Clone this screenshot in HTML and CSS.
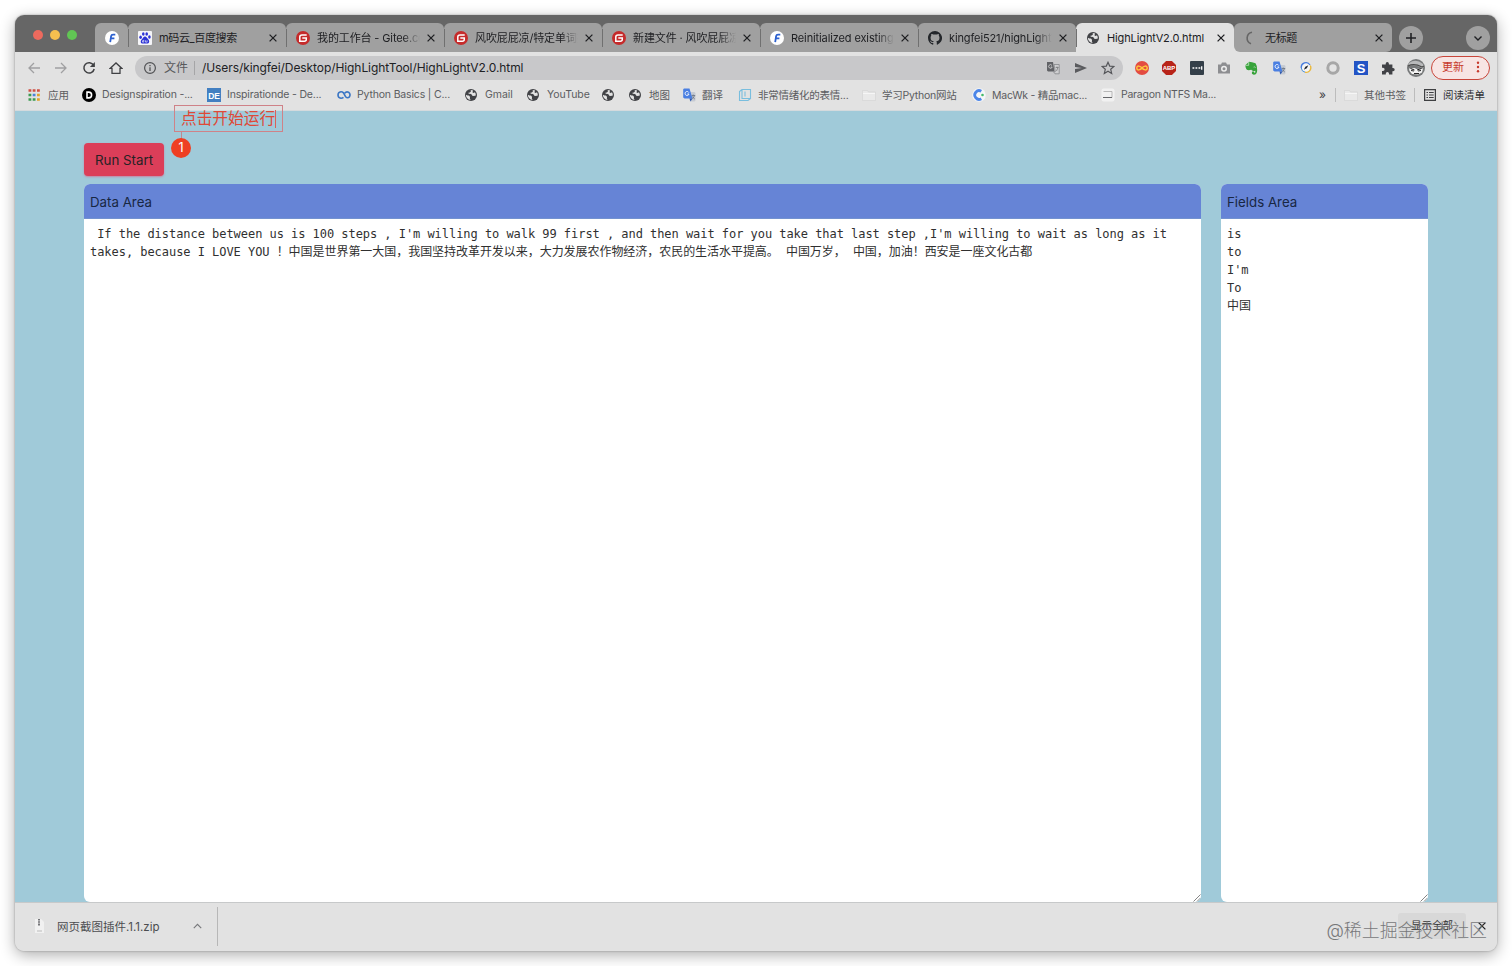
FILE: index.html
```html
<!DOCTYPE html>
<html lang="zh-CN">
<head>
<meta charset="utf-8">
<title>HighLightV2.0.html</title>
<link rel="stylesheet" href="styles.css">
</head>
<body>
<svg class="defs" width="0" height="0" aria-hidden="true">
  <symbol id="globe" viewBox="0 0 12 12"><circle cx="6" cy="6" r="6" fill="#414246"/><path d="M.9 5.800 2.600 6.600l1.400-.1 1.100 1.500-.3 1.200.8 1.700A5 5 0 0 1 .9 5.800zM5.600 1 6 2.200 4.900 3.400l-1.500.3.300 1.100 2.500.3 1.100 1.600 1.600.3 1.900-.5A4.900 4.900 0 0 0 10 3.300L8.600 4 7.400 3.300 8.200 1.600A5 5 0 0 0 5.600 1z" fill="#e2e2e2"/></symbol>
  <symbol id="gitee" viewBox="0 0 14 14"><circle cx="7" cy="7" r="7" fill="#c52b2b"/><path d="M10.700 4H6Q3.800 4 3.800 6V10.200H8.300Q10.300 10.200 10.300 8.200V7H6.300" fill="none" stroke="#fff" stroke-width="1.500"/></symbol>
  <symbol id="fmark" viewBox="0 0 14 14"><circle cx="7" cy="7" r="7" fill="#fff"/><path d="M5.200 11.200 6.100 5.200Q6.400 3.700 8 3.700H10.300M5.800 7.300H9.400" fill="none" stroke="#2d61cf" stroke-width="1.800"/></symbol>
  <symbol id="x" viewBox="0 0 8 8"><path d="m.6.6 6.800 6.800m0-6.800L.6 7.400" stroke="#202124" stroke-width="1.300"/></symbol>
  <symbol id="folder" viewBox="0 0 14 12"><path d="M.5 1.500h5l1 1.500h7v8.500H.5z" fill="#e9e9e9" stroke="#d2d2d2" stroke-width=".6"/><path d="M1 4.500h12" stroke="#f6f6f6"/></symbol>
  <symbol id="gtrans" viewBox="0 0 14 14"><path d="M6 4h6.500l1 1v7.500l-1 1H8z" fill="#c6cbd3"/><path d="M2 .5h5.500l3 10H2.500L1.200 9.500V1.300z" fill="#4a7fe2"/><path d="M7.500 10.500h3l-2 3z" fill="#2d58ae"/><path d="M6.800 4.500A2 2 0 1 0 7 6H5.300" fill="none" stroke="#fff" stroke-width=".9"/><path d="M9.700 7.500h3.500M11.200 6.500v1m1.300 0q-.5 2-2.200 3m.2-2q1 2 2.300 2.500" fill="none" stroke="#687180" stroke-width=".8"/></symbol>
  <symbol id="grip" viewBox="0 0 8 8"><path d="M.5 7.500 7.500.5M4 7.500 7.500 4" stroke="#777" stroke-width=".9"/></symbol>
</svg>
<div class="window">
  <div class="tabstrip">
    <div class="lights"><i class="red"></i><i class="yellow"></i><i class="green"></i></div>
    <div class="tab pinned"><svg class="fav"><use href="#fmark"/></svg></div>
    <div class="tab"><svg class="fav" viewBox="0 0 14 14"><rect width="14" height="14" rx="1" fill="#f5f5f8"/><g fill="#2c32d6"><ellipse cx="2.600" cy="6.300" rx="1.300" ry="1.700"/><ellipse cx="5.300" cy="3" rx="1.300" ry="1.800"/><ellipse cx="8.700" cy="3" rx="1.300" ry="1.800"/><ellipse cx="11.400" cy="6" rx="1.300" ry="1.700"/><path d="M7 5.600c1.500 0 2 1.600 3.200 2.700 2 2 .7 4.500-1.200 4.300-1.500-.2-2.500-.2-4 0-2 .2-3.200-2.200-1.300-4.200C5 7.300 5.500 5.600 7 5.600z"/></g><path d="M5.800 8.800v2.300H4.500V9.700h1.300M7.500 9.300v1.800h1.600V9.300" fill="none" stroke="#fff" stroke-width=".6"/></svg><span class="title cn">m码云_百度搜索</span><svg class="close"><use href="#x"/></svg></div>
    <div class="tab"><svg class="fav"><use href="#gitee"/></svg><span class="title fade">我的工作台 - Gitee.com</span><svg class="close"><use href="#x"/></svg></div>
    <div class="tab"><svg class="fav"><use href="#gitee"/></svg><span class="title fade">风吹屁屁凉/特定单词提取</span><svg class="close"><use href="#x"/></svg></div>
    <div class="tab"><svg class="fav"><use href="#gitee"/></svg><span class="title fade">新建文件 · 风吹屁屁凉/特定</span><svg class="close"><use href="#x"/></svg></div>
    <div class="tab"><svg class="fav"><use href="#fmark"/></svg><span class="title fade">Reinitialized existing Git</span><svg class="close"><use href="#x"/></svg></div>
    <div class="tab"><svg class="fav" viewBox="0 0 16 16"><path fill="#24272b" d="M8 0C3.580 0 0 3.580 0 8c0 3.540 2.290 6.530 5.470 7.590.4.070.55-.17.55-.38v-1.490c-2.010.37-2.530-.49-2.690-.94-.09-.23-.48-.94-.82-1.130-.28-.15-.68-.52-.01-.53.63-.01 1.080.58 1.230.82.72 1.210 1.870.87 2.330.66.070-.52.28-.87.51-1.070-1.780-.2-3.640-.89-3.640-3.950 0-.87.31-1.590.82-2.150-.08-.2-.36-1.020.08-2.120 0 0 .67-.21 2.200.82a7.600 7.600 0 0 1 4 0c1.530-1.040 2.200-.82 2.200-.82.44 1.100.16 1.920.08 2.120.51.56.82 1.270.82 2.150 0 3.070-1.870 3.750-3.650 3.950.29.25.54.73.54 1.480v2.200c0 .21.150.46.55.38A8 8 0 0 0 8 0z"/></svg><span class="title fade">kingfei521/highLightTool</span><svg class="close"><use href="#x"/></svg></div>
    <div class="tab active"><svg class="fav small"><use href="#globe"/></svg><span class="title">HighLightV2.0.html</span><svg class="close"><use href="#x"/></svg></div>
    <div class="tab last"><svg class="fav" viewBox="0 0 14 14"><path d="M8 1.200A6 6 0 0 0 7 12.700" fill="none" stroke="#666" stroke-width="1.600"/></svg><span class="title cn">无标题</span><svg class="close"><use href="#x"/></svg></div>
    <svg class="round plus" viewBox="0 0 24 24"><circle cx="12" cy="12" r="12" fill="#a0a0a0"/><path d="M7 12h10M12 7v10" stroke="#202124" stroke-width="1.600"/></svg>
    <svg class="round down" viewBox="0 0 24 24"><circle cx="12" cy="12" r="12" fill="#a0a0a0"/><path d="m8.500 10.500 3.500 3.500 3.500-3.500" fill="none" stroke="#202124" stroke-width="1.400"/></svg>
  </div>

  <div class="toolbar">
    <div class="nav">
      <svg viewBox="0 0 14 14"><path d="M13 7H2m5-5L2 7l5 5" fill="none" stroke="#a0a0a2" stroke-width="1.300"/></svg>
      <svg viewBox="0 0 14 14"><path d="M1 7h11M7 2l5 5-5 5" fill="none" stroke="#a0a0a2" stroke-width="1.300"/></svg>
      <svg viewBox="0 0 14 14"><path d="M11.600 4.200A5.200 5.200 0 1 0 12.200 8" fill="none" stroke="#404144" stroke-width="1.500"/><path d="M12.900 1v5h-5z" fill="#404144"/></svg>
      <svg viewBox="0 0 14 14"><path d="M1.300 7.300 7 2 12.700 7.300H11v5H3v-5z" fill="none" stroke="#404144" stroke-width="1.300"/></svg>
    </div>
    <div class="address">
      <svg class="info" viewBox="0 0 12 12"><circle cx="6" cy="6" r="5.400" fill="none" stroke="#505154" stroke-width="1.200"/><path d="M6 5.200V9M6 3v1.200" stroke="#505154" stroke-width="1.300"/></svg>
      <span class="scheme">文件</span><span class="url">/Users/kingfei/Desktop/HighLightTool/HighLightV2.0.html</span>
      <div class="actions">
        <svg viewBox="0 0 14 14"><path d="M1 1h6l1.500 9.500H2L1 9.500z" fill="#616266"/><path d="M8 3.500h5.200v9.300H9L7.500 10.700h1.800z" fill="#cfcfd1" stroke="#85868a" stroke-width=".8"/><path d="M6 4.500A1.800 1.800 0 1 0 6.200 6H4.800" fill="none" stroke="#d5d5d7" stroke-width=".8"/><path d="M9.700 6.500h2.800M11 5.500v1m1 0-1.500 3.500" fill="none" stroke="#77787b" stroke-width=".8"/></svg>
        <svg viewBox="0 0 14 14"><path d="m1 2 12 5-12 5V8.100L8 7 1 5.900z" fill="#5a5b5e"/></svg>
        <svg viewBox="0 0 14 14"><path d="m7 1.300 1.700 3.800 4.200.4-3.200 2.800 1 4.100L7 10.200l-3.700 2.200 1-4.100-3.200-2.800 4.200-.4z" fill="none" stroke="#55565a" stroke-width="1.200"/></svg>
      </div>
    </div>
    <div class="extensions">
      <svg viewBox="0 0 14 14"><circle cx="7" cy="7" r="7" fill="#e34c42"/><path d="M7 7C5.500 4.800 1.800 4.200 1.800 7s3.700 2.200 5.200 0 5.200-2.800 5.200 0S8.500 9.200 7 7z" fill="none" stroke="#ffc83d" stroke-width="1.500"/></svg>
      <svg viewBox="0 0 14 14"><path d="M4.100 0h5.800L14 4.100v5.800L9.900 14H4.100L0 9.900V4.100z" fill="#b82419"/><text x="7" y="9.100" text-anchor="middle" class="abp">ABP</text></svg>
      <svg viewBox="0 0 14 14"><rect width="14" height="14" rx="1" fill="#343f49"/><path d="M2.500 7h1.800M5.500 7h1.800M8.500 7h1.800M11.700 5.300v3.400" stroke="#fff" stroke-width="1.300"/></svg>
      <svg viewBox="0 0 14 14"><path d="M1 3.500h3l1-2h4l1 2h3v9H1z" fill="#8d8e91"/><circle cx="7" cy="7.800" r="3" fill="#eee"/><circle cx="7" cy="7.800" r="1.500" fill="#8d8e91"/></svg>
      <svg viewBox="0 0 14 14"><path d="M1.500 4 5 .7 8 1.300l3.500.9Q13.500 5 13.200 9q0 4.700-3.400 4.700-2.800-.4-1.600-3.200h1.900v1.300l1.200-.3V9.700Q8 10.500 7.300 8.800 4 10 2.400 8.300 1 6.500 1.500 4z" fill="#37a33a"/><path d="M1.700 4.300h3V1.200M9.700 6.200q1-1 1.800.5" fill="none" stroke="#dcebdc" stroke-width=".7"/></svg>
      <svg><use href="#gtrans"/></svg>
      <svg viewBox="0 0 14 14"><circle cx="7" cy="6.500" r="4.700" fill="#f5f5f5"/><path d="M2.300 7A4.700 4.700 0 0 1 11 4" fill="none" stroke="#467bdc" stroke-width="1.300"/><path d="M11.300 4.500A4.700 4.700 0 0 1 6 11.200" fill="none" stroke="#eab83b" stroke-width="1.300"/><path d="M6 11.200A4.700 4.700 0 0 1 2.300 7" fill="none" stroke="#498fd8"/><path d="m4.800 8.800 1.500-3 3-1.600-1.500 3z" fill="#20252d"/></svg>
      <svg viewBox="0 0 14 14"><circle cx="7" cy="7" r="5.200" fill="#e4e4e4" stroke="#a7a7a7" stroke-width="3"/></svg>
      <svg viewBox="0 0 14 14"><rect width="14" height="14" fill="#2354c5"/><text x="7" y="11.800" text-anchor="middle" class="smark">S</text></svg>
      <svg viewBox="0 0 14 14"><path d="M1 3.500h3.700V2.700a1.600 1.600 0 0 1 3.200 0v.8h3.500V7h.7a1.600 1.600 0 0 1 0 3.200h-.7v3.300H8v-1a1.600 1.600 0 0 0-3.200 0v1H1v-3.600h1a1.600 1.600 0 0 0 0-3.200H1z" fill="#414246"/></svg>
      <svg class="avatar" viewBox="0 0 18 18"><circle cx="9" cy="9" r="9" fill="#77797a"/><path d="M2 4Q9-1 16 5l1 3-2 1Q8 5 1 7z" fill="#b9babb"/><path d="M1 7q6-3 14 1l2-1" fill="none" stroke="#4a4a4a" stroke-width="1.200"/><path d="M2 9.500 8 9l1 1 7-.5-1 4-4 2-6-.5-2.500-3z" fill="#f2f2f2"/><path d="m3.500 9.500 4 1.500M14.500 9.500 10 11M4 11.500l3 .5m7-.5-3 .5M7 14.500h5" stroke="#252525" stroke-width="1"/></svg>
    </div>
    <div class="update"><span>更新</span><svg viewBox="0 0 4 14"><g fill="#c73a2d"><circle cx="2" cy="2" r="1.400"/><circle cx="2" cy="7" r="1.400"/><circle cx="2" cy="12" r="1.400"/></g></svg></div>
  </div>

  <div class="bookmarks">
    <div class="bm"><svg viewBox="0 0 14 14"><path d="M1.500 2.500h2.800M5.700 2.500h2.800M10 2.500h2.800" stroke="#d05044" stroke-width="2.600"/><path d="M1.500 7h2.800M1.500 11.500h2.800M5.700 11.500h2.800" stroke="#3c9a50" stroke-width="2.600"/><path d="M5.700 7h2.800" stroke="#4b83db" stroke-width="2.600"/><path d="M10 7h2.800M10 11.500h2.800" stroke="#e1a22c" stroke-width="2.600"/></svg><span>应用</span></div>
    <div class="bm"><svg viewBox="0 0 14 14"><circle cx="7" cy="7" r="7"/><path d="M5 4.100h1.700a2.900 2.900 0 0 1 0 5.800H5z" fill="none" stroke="#fff" stroke-width="1.600"/></svg><span>Designspiration -...</span></div>
    <div class="bm"><svg viewBox="0 0 14 14"><rect width="14" height="14" fill="#427fc1"/><text x="7" y="10.500" text-anchor="middle" class="de">DE</text></svg><span>Inspirationde - De...</span></div>
    <div class="bm"><svg viewBox="0 0 14 14"><path d="M6.500 9.300Q5.300 10.300 3.900 10.200 1 9.800 1 7t2.900-3.200Q5.300 3.700 6.500 4.900L8.600 8.700q2 2 3.800.2Q14 6 11.500 4.200 9.300 3.200 7.700 5.200" fill="none" stroke="#3b76c4" stroke-width="1.600"/></svg><span>Python Basics | C...</span></div>
    <div class="bm"><svg class="g"><use href="#globe"/></svg><span>Gmail</span></div>
    <div class="bm"><svg class="g"><use href="#globe"/></svg><span>YouTube</span></div>
    <div class="bm"><svg class="g"><use href="#globe"/></svg></div>
    <div class="bm"><svg class="g"><use href="#globe"/></svg><span>地图</span></div>
    <div class="bm"><svg><use href="#gtrans"/></svg><span>翻译</span></div>
    <div class="bm"><svg viewBox="0 0 14 14"><path d="M4 1.500h8.500v9H4zM4 1.500 1.500 3.500v9H10l2.500-2M7 3.500v5" fill="none" stroke="#79bede" stroke-width="1.100"/></svg><span>非常情绪化的表情...</span></div>
    <div class="bm"><svg><use href="#folder"/></svg><span>学习Python网站</span></div>
    <div class="bm"><svg viewBox="0 0 14 14"><circle cx="7" cy="7" r="6.800" fill="#f5f6f8"/><path d="M9.300 3.300A4.300 4.300 0 1 0 9.300 10.700" fill="none" stroke="#4c86e8" stroke-width="2.800"/><circle cx="10.500" cy="7" r="1.300" fill="#43b96b"/></svg><span>MacWk - 精品mac...</span></div>
    <div class="bm"><svg viewBox="0 0 14 14"><rect x=".5" y=".5" width="13" height="13" rx="2" fill="#f1f1f1"/><path d="M2.500 3.500h8.500v6H2.500" fill="none" stroke="#aaa" stroke-width=".8"/><path d="M2 9.500h9" stroke="#66676a"/></svg><span>Paragon NTFS Ma...</span></div>
    <div class="more">»</div>
    <div class="bm split"><svg><use href="#folder"/></svg><span>其他书签</span></div>
    <div class="bm split reading"><svg viewBox="0 0 14 14"><path d="M1.600 1.600h10.800v10.800H1.600zM3.500 4.500H5M6 4.500h4.700M3.500 7H5M6 7h4.700M3.500 9.500H5M6 9.500h4.700" fill="none" stroke="#3e3f42" stroke-width="1.200"/></svg><span>阅读清单</span></div>
  </div>

  <main class="page">
    <button class="run">Run Start</button>
    <div class="panels">
      <section class="panel"><h2>Data Area</h2><div class="field"><div class="line">&nbsp;If the distance between us is 100 steps , I'm willing to walk 99 first , and then wait for you take that last step ,I'm willing to wait as long as it</div><div class="line">takes, because I LOVE YOU ！中国是世界第一大国，我国坚持改革开发以来，大力发展农作物经济，农民的生活水平提高。 中国万岁， 中国，加油！西安是一座文化古都</div><svg class="grip"><use href="#grip"/></svg></div></section>
      <section class="panel"><h2>Fields Area</h2><div class="field"><div class="line">is</div><div class="line">to</div><div class="line">I'm</div><div class="line">To</div><div class="line">中国</div><svg class="grip"><use href="#grip"/></svg></div></section>
    </div>
    <div class="callout">点击开始运行</div>
    <div class="step">1</div>
  </main>

  <footer class="downloads">
    <div class="download"><svg viewBox="0 0 14 16"><path d="M3 1h6l3 3v11H3z" fill="#f1f1f1"/><path d="M7 1v7" stroke="#55565a" stroke-width="1.600" stroke-dasharray="1.500 .7"/><path d="M5 13h5" stroke="#bbb"/></svg><span>网页截图插件.1.1.zip</span><svg class="up" viewBox="0 0 8 5"><path d="m.7 4.300 3.300-3.300 3.300 3.300" fill="none" stroke="#77787b" stroke-width="1"/></svg></div>
    <div class="showall"><span>显示全部</span></div>
    <svg class="shelfclose"><use href="#x"/></svg>
    <div class="watermark">@稀土掘金技术社区</div>
  </footer>
</div>
</body>
</html>
```
FILE: styles.css
```css
* { box-sizing: border-box; }
body { margin: 0; width: 1512px; height: 966px; overflow: hidden; background: #fff; font-family: Inter, "Noto Sans CJK SC", sans-serif; color: #202124; padding: 15px; }
svg { display: block; flex: none; }
.defs { position: absolute; }
.window { width: 1482px; height: 936px; display: flex; flex-direction: column; border-radius: 9px; overflow: hidden; background: #e2e2e2; box-shadow: 0 0 2px rgba(0,0,0,.35), 0 4px 15px rgba(0,0,0,.32); }

.tabstrip { flex: none; height: 37px; background: #666; display: flex; align-items: flex-start; padding-top: 8px; }
.lights { width: 80px; height: 23px; padding-left: 18px; display: flex; align-items: center; gap: 7px; }
.lights i { width: 10px; height: 10px; border-radius: 50%; }
.red { background: #ed6a5e; }
.yellow { background: #f5bf4f; }
.green { background: #61c554; }
.tab { width: 158px; height: 29px; padding: 0 9px 0 10px; display: flex; align-items: center; background: #a0a0a0; border-radius: 6px 6px 0 0; font-size: 11px; position: relative; }
.tab.pinned { width: 33px; }
.tab:not(.active):not(.last)::after { content: ""; position: absolute; right: -1px; top: 6px; width: 1px; height: 18px; background: #707070; z-index: 1; }
.tab.active { background: #e2e2e2; }
.tab.active::after { content: ""; position: absolute; right: -6px; bottom: 0; width: 12px; height: 6px; background: #e2e2e2; }
.tab.last { border-radius: 6px; z-index: 1; }
.fav { width: 14px; height: 14px; margin-right: 7px; }
.fav.small { width: 12px; height: 12px; margin: 0 8px 0 1px; }
.title { width: 103px; white-space: nowrap; overflow: hidden; line-height: 18px; letter-spacing: -.12px; }
.title.cn { letter-spacing: -.35px; }
.fade { -webkit-mask-image: linear-gradient(90deg, #000 84%, transparent 100%); mask-image: linear-gradient(90deg, #000 84%, transparent 100%); }
.close { width: 8px; height: 8px; margin-left: 7px; }
.round { width: 24px; height: 24px; margin-top: 3px; }
.plus { margin-left: 7px; }
.down { margin-left: auto; margin-right: 7px; }

.toolbar { flex: none; height: 31px; display: flex; align-items: center; }
.nav { width: 120px; padding-left: 12px; display: flex; gap: 13.400px; }
.nav svg, .actions svg { width: 14px; height: 14px; }
.address { width: 988px; height: 24px; border-radius: 12px; background: #c8c8ca; display: flex; align-items: center; padding: 0 8px 0 9px; }
.info { width: 12px; height: 12px; margin-right: 8px; }
.scheme { font-size: 12px; color: #58595c; width: 31px; height: 14px; line-height: 14px; border-right: 1px solid #a5a5a7; }
.url { margin-left: 7px; font-size: 12px; letter-spacing: -.08px; }
.actions { margin-left: auto; display: flex; gap: 13.500px; }
.extensions { width: 302px; margin-left: 12px; display: flex; align-items: center; gap: 13.350px; }
.extensions svg { width: 14px; height: 14px; }
.extensions .avatar { width: 18px; height: 18px; margin-left: -1px; }
.abp { font: bold 6px "Liberation Sans", sans-serif; fill: #fff; }
.smark { font: bold 13px "Liberation Sans", sans-serif; fill: #fff; }
.de { font: bold 8.500px "Liberation Sans", sans-serif; fill: #fff; }
.update { width: 59px; height: 24px; margin-left: -6px; border: 1px solid #c8453a; border-radius: 12px; background: #f7e5e4; color: #c73a2d; font-size: 11px; line-height: 20px; display: flex; align-items: center; padding: 0 0 1px 10px; }
.update svg { width: 4px; height: 12px; margin-left: 12px; }

.bookmarks { flex: none; height: 28px; padding: 0 0 4px 12px; display: grid; align-items: center; grid-template-columns: 55px 125px 130px 127px 62px 75px 27px 54px 56px 124px 110px 129px 218px 16px 79px 80px; font-size: 10.500px; letter-spacing: -.04px; color: #5b5c60; border-bottom: 1px solid #d4dadd; }
.bm { display: flex; align-items: center; height: 20px; white-space: nowrap; }
.bm svg { width: 14px; height: 14px; margin-right: 6px; }
.bm:first-child svg { margin-right: 7px; }
.bm:nth-child(n+2):nth-child(-n+4) { letter-spacing: -.17px; }
.bm:nth-child(n+10):nth-child(-n+13) { letter-spacing: -.24px; }
.bm .g { width: 12px; height: 12px; margin: 0 8px 0 1px; }
.more { font-size: 12px; color: #3e3f42; }
.bm.split { height: 14px; border-left: 1px solid #bcbcbc; padding-left: 8px; }
.reading { color: #303135; }

.page { flex: none; height: 791px; background: #a0cad9; padding: 32px 68px 0 69px; position: relative; }
.run { display: block; width: 80px; height: 33px; border: 0; border-radius: 4px; padding: 0; background: #db3e59; color: #272225; font: 13.300px Inter, sans-serif; box-shadow: 0 1px 2px rgba(215,104,139,.7); }
.panels { display: grid; grid-template-columns: 1117px 207px; gap: 20px; margin-top: 8px; }
.panel { height: 718px; display: flex; flex-direction: column; border-radius: 6px; overflow: hidden; background: #fff; }
.panel h2 { margin: 0; height: 35px; padding: 1px 6px 0; line-height: 35px; font-size: 13.300px; font-weight: 400; color: #182743; background: #6684d6; border-bottom: 1px solid #7392d0; }
.field { flex: 1; padding: 6px 6px; position: relative; font-family: "DejaVu Sans Mono", "Noto Sans CJK SC", monospace; font-size: 12px; letter-spacing: -.045px; color: #303030; }
.line { height: 18px; line-height: 18px; white-space: nowrap; }
.grip { position: absolute; right: 0; bottom: 0; width: 8px; height: 8px; }
.callout { position: absolute; left: 159px; top: -6px; width: 109px; height: 27px; border: 1px solid #cf8288; color: #df4937; font-size: 15.700px; line-height: 26px; padding-left: 6px; white-space: nowrap; }
.callout::after { content: ""; position: absolute; left: 100px; top: 4px; width: 1px; height: 18px; background: #d96359; }
.callout::before { content: ""; position: absolute; left: 6px; top: 26px; width: 1px; height: 8px; background: #bb8a93; }
.step { position: absolute; left: 156px; top: 27px; width: 20px; height: 20px; border-radius: 50%; background: #ee3f23; color: #fff; text-align: center; font-size: 12.500px; line-height: 20px; }

.downloads { flex: 1; border-top: 1px solid #c7c9ca; background: #e2e2e2; display: flex; align-items: center; position: relative; padding-bottom: 2px; }
.download { width: 203px; height: 39px; border-right: 1px solid #b7b7b7; padding-left: 17px; display: flex; align-items: center; font-size: 11.500px; color: #4c4d50; }
.download svg { width: 14px; height: 16px; margin-right: 11px; }
.download span { width: 136px; }
.download .up { width: 9px; height: 6px; margin: 0; }
.showall { margin-left: auto; width: 68px; height: 26px; border-radius: 3px; background: #d8d8d8; text-align: center; line-height: 26px; font-size: 10.500px; color: #333; }
.shelfclose { width: 8px; height: 8px; margin: 0 11px 0 12px; }
.watermark { position: absolute; right: 10px; top: 15px; font-size: 17.900px; font-weight: 300; line-height: 26px; color: #77787a; white-space: nowrap; }
```
